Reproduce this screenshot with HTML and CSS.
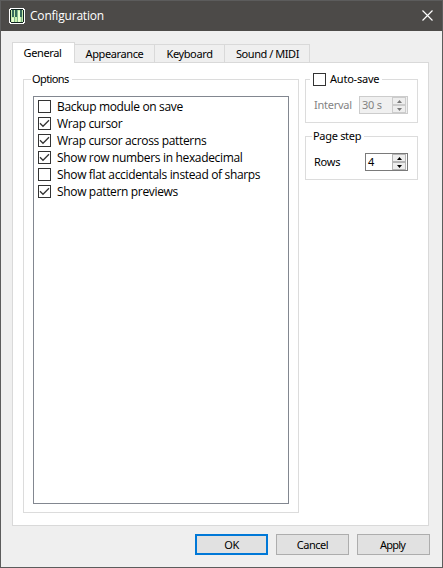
FILE: index.html
```html
<!DOCTYPE html>
<html lang="en">
<head>
<meta charset="utf-8">
<title>Configuration</title>
<link rel="stylesheet" href="styles.css">
</head>
<body>
<div class="window">
  <header class="titlebar">
    <svg class="logo" width="16" height="16" viewBox="0 0 16 16" shape-rendering="crispEdges">
      <path fill="#fff" d="M1 0h14v1h1v14h-1v1H1v-1H0V1h1z"/>
      <path fill="#10241f" d="M2 1h12v1h1v12h-1v1H2v-1H1V2h1z"/>
      <path fill="#c9eeb0" d="M2 2h12v12H2z"/>
      <path fill="#e9ffd0" d="M3 10h2v4H3zM9 3h2v11H9z"/>
      <path fill="#35695a" d="M3 2h2v7H3zM6 2h2v7H6zM11 2h2v7h-2z"/>
      <path fill="#7fb58a" d="M5 9h1v5H5zM8 2h1v12H8zM12 9h1v5h-1z"/>
    </svg>
    <h1 class="title">Configuration</h1>
    <svg class="close" width="11" height="11" viewBox="0 0 11 11"><path d="M.5.5l10 10M10.5.5l-10 10" stroke="#fff" stroke-width="1.15"/></svg>
  </header>
  <nav class="tabs">
    <div class="tab active"><span>General</span></div>
    <div class="tab appearance"><span>Appearance</span></div>
    <div class="tab keyboard"><span>Keyboard</span></div>
    <div class="tab sound"><span>Sound / MIDI</span></div>
  </nav>
  <main class="pane">
    <section class="group options">
      <div class="legend"><span>Options</span></div>
      <ul class="list">
        <li><i class="box"></i><span>Backup module on save</span></li>
        <li><i class="box"><svg width="11" height="11" viewBox="0 0 11 11"><path d="M1 5.3l3 3 6-6"/></svg></i><span>Wrap cursor</span></li>
        <li><i class="box"><svg width="11" height="11" viewBox="0 0 11 11"><path d="M1 5.3l3 3 6-6"/></svg></i><span>Wrap cursor across patterns</span></li>
        <li><i class="box"><svg width="11" height="11" viewBox="0 0 11 11"><path d="M1 5.3l3 3 6-6"/></svg></i><span>Show row numbers in hexadecimal</span></li>
        <li><i class="box"></i><span>Show flat accidentals instead of sharps</span></li>
        <li><i class="box"><svg width="11" height="11" viewBox="0 0 11 11"><path d="M1 5.3l3 3 6-6"/></svg></i><span>Show pattern previews</span></li>
      </ul>
    </section>
    <div class="side">
      <section class="group small">
        <div class="legend check"><i class="box"></i><span>Auto-save</span></div>
        <div class="field disabled">
          <label>Interval</label>
          <div class="spin"><span>30 s</span>
            <div class="arrows"><b><svg width="5" height="3"><path d="M0 3l2.5-3L5 3z"/></svg></b><b><svg width="5" height="3"><path d="M0 0l2.5 3L5 0z"/></svg></b></div>
          </div>
        </div>
      </section>
      <section class="group small">
        <div class="legend"><span>Page step</span></div>
        <div class="field">
          <label>Rows</label>
          <div class="spin"><span>4</span>
            <div class="arrows"><b><svg width="5" height="3"><path d="M0 3l2.5-3L5 3z"/></svg></b><b><svg width="5" height="3"><path d="M0 0l2.5 3L5 0z"/></svg></b></div>
          </div>
        </div>
      </section>
    </div>
  </main>
  <footer class="buttons">
    <button class="btn default">OK</button>
    <button class="btn">Cancel</button>
    <button class="btn apply">Apply</button>
  </footer>
</div>
</body>
</html>
```

FILE: styles.css
```css
* { box-sizing: border-box; }
body { margin: 0; font: 11px/14px "Noto Sans", sans-serif; color: #000; }
svg { display: block; }
span { white-space: nowrap; }
.window { width: 443px; height: 568px; border: 1px solid #5c5c5c; background: #efefef; }
.titlebar { height: 30px; background: #4c4a48; display: flex; align-items: center; padding: 0 9px 0 8px; }
.title { margin: 0 0 0 5px; font: 12px/16px "Open Sans", sans-serif; color: #fff; letter-spacing: -0.2px; flex: 1; }
.close { margin-top: -2px; }
.tabs { display: flex; align-items: flex-end; height: 31px; padding-left: 11px; letter-spacing: -0.38px; }
.tab { height: 18px; border: 1px solid #d9d9d9; border-width: 1px 1px 0 0; display: flex; align-items: center; justify-content: center; padding-top: 1px; }
.tab.active { width: 63px; height: 21px; border-left-width: 1px; background: #fff; margin-bottom: -1px; padding: 0 2px 0 0; position: relative; }
.appearance { width: 80px; }
.keyboard { width: 70px; }
.sound { width: 85px; padding-left: 1px; letter-spacing: -0.45px; }
.pane { margin-left: 11px; width: 417px; height: 464px; background: #fff; border: 1px solid #d9d9d9; padding: 16px 10px 0; display: flex; gap: 6px; align-items: flex-start; }
.group { border: 1px solid #dcdcdc; }
.options { width: 276px; height: 434px; padding: 0 9px; }
.legend { height: 14px; width: max-content; margin: -8px 0 0 -2px; padding: 0 3px 0 1px; background: #fff; letter-spacing: -0.3px; }
.options .legend { letter-spacing: -0.6px; }
.list { list-style: none; margin: 10px 0 0; padding: 1px 4px; width: 256px; height: 408px; border: 1px solid #828790; font: 12px/17px "Open Sans", sans-serif; letter-spacing: -0.34px; }
.list li { display: flex; align-items: center; height: 17px; gap: 6px; }
.box { width: 13px; height: 13px; flex: none; border: 1px solid #333; background: #fff; }
.box path { fill: none; stroke: #333; stroke-width: 1.3; }
.side { width: 113px; display: flex; flex-direction: column; gap: 13px; }
.small { height: 44px; padding: 0 9px 0 8px; }
.small .check { display: flex; gap: 4px; margin-left: -4px; padding: 0 3px; align-items: center; letter-spacing: -0.22px; }
.field { display: flex; justify-content: space-between; align-items: center; margin-top: 10px; height: 18px; letter-spacing: -0.25px; }
.spin { width: 43px; height: 18px; border: 1px solid #7a7a7a; display: flex; align-items: center; padding: 0 1px 0 2px; justify-content: space-between; }
.arrows { width: 14px; height: 16px; display: flex; flex-direction: column; }
.arrows b { height: 8px; border: 1px solid #b5b5b5; background: #eee; display: flex; align-items: center; justify-content: center; }
.arrows path { fill: #000; }
.disabled { color: #838383; }
.disabled .spin { width: 49px; border-color: #ccc; background: #f0f0f0; }
.disabled .arrows b { border-color: #ccc; }
.disabled .arrows path { fill: #777; }
.buttons { display: flex; justify-content: flex-end; gap: 8px; padding: 8px 12px 0 0; }
.btn { width: 73px; height: 21px; padding: 0; border: 1px solid #adadad; background: #e1e1e1; font: inherit; color: #000; letter-spacing: -0.45px; }
.btn.apply { letter-spacing: -0.8px; padding-right: 2px; }
.btn.default { border: 2px solid #0078d7; }
```
